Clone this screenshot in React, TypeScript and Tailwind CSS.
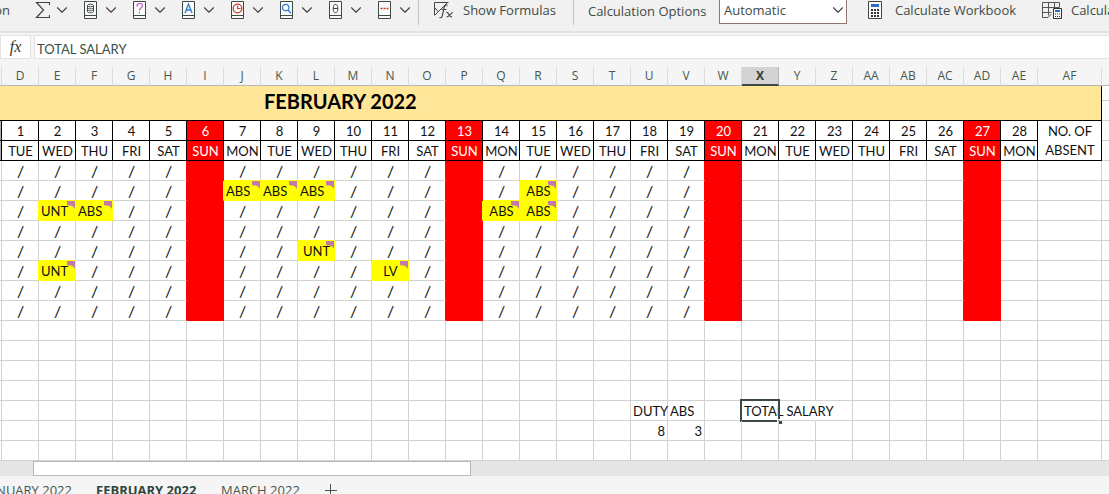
import React, { useState } from "react";
import clsx from "clsx";
import { ChevronDown } from "lucide-react";

type Fill = "red" | "yellow" | undefined;

interface Cell {
  text?: string;
  align?: "left" | "center" | "right";
  fill?: Fill;
  note?: boolean;
  spill?: boolean;
  active?: boolean;
}

const LETTERS = [
  "D", "E", "F", "G", "H", "I", "J", "K", "L", "M", "N", "O", "P", "Q",
  "R", "S", "T", "U", "V", "W", "X", "Y", "Z", "AA", "AB", "AC", "AD", "AE",
];
const WEEK = ["MON", "TUE", "WED", "THU", "FRI", "SAT", "SUN"];
const DAYS = LETTERS.map((_, i) => ({ day: i + 1, name: WEEK[(i + 1) % 7] }));
const LAST_MARKED_DAY = 19;
const ATTENDANCE_ROWS = 8;
const TOTAL_ROWS = 15;

// key is `${row}-${day}`
const MARKS: Record<string, Cell> = {
  "1-7": { text: "ABS", align: "left" },
  "1-8": { text: "ABS", align: "left" },
  "1-9": { text: "ABS", align: "left" },
  "1-15": { text: "ABS" },
  "2-2": { text: "UNT", align: "left" },
  "2-3": { text: "ABS", align: "left" },
  "2-14": { text: "ABS" },
  "2-15": { text: "ABS" },
  "4-9": { text: "UNT" },
  "5-2": { text: "UNT", align: "left" },
  "5-11": { text: "LV" },
};

const EXTRA: Record<string, Cell> = {
  "12-18": { text: "DUTY", align: "left" },
  "12-19": { text: "ABS", align: "left" },
  "12-21": { text: "TOTAL SALARY", align: "left", active: true },
  "12-22": { spill: true },
  "13-18": { text: "8", align: "right" },
  "13-19": { text: "3", align: "right" },
};

const getCell = (row: number, day: number): Cell => {
  const key = `${row}-${day}`;
  if (row >= ATTENDANCE_ROWS) return EXTRA[key] || {};
  if (day % 7 === 6 && day <= 28) return { fill: "red" };
  if (MARKS[key]) return { ...MARKS[key], fill: "yellow", note: true };
  return day <= LAST_MARKED_DAY && day > 0 ? { text: "/" } : {};
};

const rightBorder = (fill: Fill) =>
  fill === "red"
    ? "border-r-[#ff0000]"
    : fill === "yellow"
      ? "border-r-[#ffff00]"
      : "border-r-[#d2d2d2]";

const bottomBorder = (fill: Fill) =>
  fill === "red"
    ? "border-b-[#ff0000]"
    : fill === "yellow"
      ? "border-b-[#ffff00]"
      : "border-b-[#d2d2d2]";

const NoteMark = () => (
  <svg className="absolute top-0 right-0 h-2 w-2" viewBox="0 0 8 8">
    <path d="M0 0H8V8Q6.500 5 4 4.500H1L0 3.500Z" fill="#c27ba8" />
  </svg>
);

const GridCell = ({ row, day }: { row: number; day: number }) => {
  const cell = getCell(row, day);
  const next = getCell(row, day + 1);
  const below = getCell(row + 1, day);
  const align = cell.align || "center";

  return (
    <td
      className={clsx(
        "relative h-5 border-r border-b p-0 whitespace-nowrap",
        cell.spill ? "border-r-transparent" : rightBorder(next.fill || cell.fill),
        bottomBorder(below.fill || cell.fill),
        cell.fill === "red" && "bg-[#ff0000]",
        cell.fill === "yellow" && "bg-[#ffff00]",
        cell.text === "/" ? "text-base leading-[19px]" : "pt-[2px] leading-[17px]",
        align === "left" && "pl-[2px] text-left",
        align === "center" && "pl-px text-center",
        align === "right" && "pr-[2px] text-right"
      )}
    >
      {cell.text}
      {cell.note && <NoteMark />}
      {cell.active && (
        <>
          <span className="absolute -inset-x-0.5 -inset-y-0.5 border-2 border-[#3a4a42]" />
          <span className="absolute -right-1 -bottom-1 h-[5px] w-[5px] border-t border-l border-white bg-[#3a4a42]" />
        </>
      )}
    </td>
  );
};

const Sheet = () => (
  <table className="w-full table-fixed border-separate border-spacing-0 bg-white font-[Lato,Carlito,sans-serif] text-[13px] text-[#111]">
    <colgroup>
      <col className="w-[2px]" />
      {LETTERS.map((letter) => (
        <col key={letter} className="w-[37px]" />
      ))}
      <col className="w-16" />
      <col />
    </colgroup>
    <thead>
      <tr className="bg-[#f5f5f5] font-['Open_Sans',sans-serif] text-xs text-[#44584f]">
        <th className="h-[19px] border-r border-b border-r-[#dcdcdc] border-b-[#b4b9b6] p-0" />
        {[...LETTERS, "AF"].map((letter) => (
          <th
            key={letter}
            className={clsx(
              "h-[19px] border-r p-0 leading-4",
              letter === "X"
                ? "border-b-2 border-r-[#b5b5b5] border-b-[#3a4a42] bg-[#d3d3d3] font-bold text-[#2b3a33]"
                : "border-b border-r-[#dcdcdc] border-b-[#b4b9b6] pb-px font-normal"
            )}
          >
            {letter}
          </th>
        ))}
        <th className="h-[19px] border-b border-b-[#b4b9b6] p-0" />
      </tr>
    </thead>
    <tbody>
      <tr>
        <td
          colSpan={30}
          rowSpan={2}
          className="border-r border-b border-black bg-[#ffe699] p-0 pb-1 pl-[264px] text-left text-xl leading-7 font-bold text-black"
        >
          FEBRUARY 2022
        </td>
        <td className="h-[15px] border-b border-[#d2d2d2] p-0" />
      </tr>
      <tr>
        <td className="h-5 border-b border-[#d2d2d2] p-0" />
      </tr>
      {["day", "name"].map((kind) => (
        <tr key={kind}>
          <td className="h-5 border-r border-b border-black bg-[#b0b0b0] p-0" />
          {DAYS.map(({ day, name }) => (
            <td
              key={day}
              className={clsx(
                "h-5 border-r border-b border-black p-0 pt-[2px] pl-px text-center leading-[17px]",
                name === "SUN" && "bg-[#ff0000] text-white"
              )}
            >
              {kind === "day" ? day : name}
            </td>
          ))}
          {kind === "day" && (
            <td
              rowSpan={2}
              className="border-r border-b border-black p-0 pt-px pl-px text-center leading-[19px]"
            >
              NO. OF
              <br />
              ABSENT
            </td>
          )}
          <td className="h-5 border-b border-[#d2d2d2] p-0" />
        </tr>
      ))}
      {Array.from({ length: TOTAL_ROWS }, (_, row) => (
        <tr key={row}>
          <td className="h-5 border-r border-b border-[#d2d2d2] p-0" />
          {DAYS.map(({ day }) => (
            <GridCell key={day} row={row} day={day} />
          ))}
          <td className="h-5 border-r border-b border-[#d2d2d2] p-0" />
          <td className="h-5 border-b border-[#d2d2d2] p-0" />
        </tr>
      ))}
    </tbody>
  </table>
);

const Book = ({ children }: { children?: React.ReactNode }) => (
  <svg
    className="h-[18px] w-[13px]"
    viewBox="0 0 13 18"
    fill="none"
    stroke="#3b4a43"
  >
    <path d="M.5.5h12v17H.5zM.5 14.500h12" fill="#fafafa" />
    {children}
  </svg>
);

const LIBRARY = [
  {
    label: "AutoSum",
    icon: (
      <svg className="h-[18px] w-[15px]" viewBox="0 0 15 18" fill="none" stroke="#444">
        <path d="M14.500 4V1.500H1.500L8.500 9L1.500 16.500H14.500V14" strokeWidth="1.200" />
      </svg>
    ),
  },
  {
    label: "Financial",
    icon: (
      <Book>
        <ellipse cx="6.500" cy="4.500" rx="3" ry="1.300" />
        <path d="M3.500 4.500v6c0 1.700 6 1.700 6 0v-6M3.500 6.500c0 1.700 6 1.700 6 0M3.500 8.500c0 1.700 6 1.700 6 0" />
      </Book>
    ),
  },
  {
    label: "Logical",
    icon: (
      <Book>
        <path d="M3.800 5.500c0-4 5.700-3.800 5.700-.7c0 2.200-3 2.200-3 4.700M6.500 11v1.500" stroke="#b660b8" strokeWidth="1.200" />
      </Book>
    ),
  },
  {
    label: "Text",
    icon: (
      <Book>
        <path d="M3 12L6.500 3L10 12M4.200 9h4.600" stroke="#2b7cd3" strokeWidth="1.300" />
      </Book>
    ),
  },
  {
    label: "Date & Time",
    icon: (
      <Book>
        <circle cx="6.500" cy="7.500" r="4.300" stroke="#d0402b" strokeWidth="1.300" />
        <path d="M6.500 4.500v3h3" stroke="#d0402b" strokeWidth="1.200" />
      </Book>
    ),
  },
  {
    label: "Lookup & Reference",
    icon: (
      <Book>
        <circle cx="5.700" cy="6.500" r="3.200" stroke="#2b7cd3" strokeWidth="1.200" />
        <path d="M8 9l3 3.200" stroke="#2b7cd3" strokeWidth="1.300" />
      </Book>
    ),
  },
  {
    label: "Math & Trig",
    icon: (
      <Book>
        <ellipse cx="6.500" cy="7.500" rx="2.300" ry="4.200" />
        <path d="M4.200 7.500h4.600" />
      </Book>
    ),
  },
  {
    label: "More Functions",
    icon: (
      <Book>
        <path d="M2.500 7.500h8" stroke="#d0402b" strokeWidth="1.500" strokeDasharray="2 1" />
      </Book>
    ),
  },
];

const ShowFormulasIcon = () => (
  <svg className="h-[18px] w-5" viewBox="0 0 20 18" fill="none" stroke="#444">
    <path d="M.5 14V1.500H14.500M.5 14.500L13 2M1 7L4 10.500" />
    <path d="M13.500 4.500c-2-1.500-3 0-3.500 2.500L8.500 14c-.4 2.300-1.500 3.200-3 2.500M7.500 8.500h5" strokeWidth="1.200" />
    <path d="M12.500 11.500c2.500-1 2 4.500 5.500 4.500M19 11.500c-2 0-4 4.500-6.500 4.500" strokeWidth="1.100" />
  </svg>
);

const CalculatorIcon = () => (
  <svg className="h-[18px] w-[14px]" viewBox="0 0 14 18" fill="none">
    <path d="M.5.5h13v17H.5z" fill="#fafafa" stroke="#444" />
    <path d="M3 3h8v3H3z" fill="#2b6cc4" />
    <path d="M3 9h8M3 12h8M3 15h8" stroke="#333" strokeWidth="2" strokeDasharray="2 1" />
  </svg>
);

const CalculateSheetIcon = () => (
  <svg className="h-[18px] w-5" viewBox="0 0 20 18" fill="none">
    <path
      d="M17.500 6V1.500H.5v15H6L9.500 13M.5 6.500h17M.5 11.500h9M6.500 1.500v13M12.500 1.500v5"
      stroke="#555"
    />
    <path d="M11.500 7.500h8v10h-8z" fill="#fafafa" stroke="#333" />
    <path d="M13 9h5v2h-5z" fill="#2b6cc4" />
    <path d="M13 13h5M13 15.500h5" stroke="#333" strokeDasharray="1 1" />
  </svg>
);

const Ribbon = () => (
  <div className="flex h-[31px] items-start overflow-hidden bg-[#f1f1f1] text-[13px] leading-5 whitespace-nowrap text-[#3f4a45]">
    <div className="flex w-[10px] shrink-0 justify-end overflow-hidden">on</div>
    <div className="ml-[25px] flex shrink-0">
      {LIBRARY.map(({ label, icon }) => (
        <button
          key={label}
          aria-label={label}
          className="flex w-[49px] items-center pt-px"
        >
          <span className="w-[22px]">{icon}</span>
          <ChevronDown size={18} strokeWidth={1.500} className="-ml-1 text-[#444]" />
        </button>
      ))}
    </div>
    <div className="ml-[-9px] h-[25px] w-px shrink-0 bg-[#c3c3c3]" />
    <button className="ml-[15px] flex shrink-0 items-center gap-[9px]">
      <ShowFormulasIcon />
      Show Formulas
    </button>
    <div className="ml-[17px] h-[25px] w-px shrink-0 bg-[#c3c3c3]" />
    <label htmlFor="calc-mode" className="ml-[14px] w-[131px] shrink-0 pt-px">
      Calculation Options
    </label>
    <div className="relative w-32 shrink-0">
      <select
        id="calc-mode"
        className="block h-6 w-full appearance-none border border-t-0 border-[#8f7470] bg-white pb-1 pl-1"
      >
        <option>Automatic</option>
      </select>
      <ChevronDown
        size={18}
        strokeWidth={1.500}
        className="pointer-events-none absolute top-px right-0 text-[#444]"
      />
    </div>
    <button className="ml-[21px] flex w-[174px] shrink-0 items-center gap-[13px]">
      <CalculatorIcon />
      Calculate Workbook
    </button>
    <button className="flex shrink-0 items-center gap-[9px]">
      <CalculateSheetIcon />
      Calculate Sheet
    </button>
  </div>
);

const FormulaBar = () => {
  const [value, setValue] = useState("TOTAL SALARY");

  return (
    <div className="flex gap-[3px] border-t-2 border-[#e2e2e2] bg-[#f5f5f5] pt-[2px] pb-2">
      <button
        aria-label="Insert function"
        className="h-6 w-[31px] border border-[#e2e2e2] bg-white font-['Liberation_Serif',serif] text-base leading-5 text-[#333] italic"
      >
        fx
      </button>
      <input
        aria-label="Formula"
        value={value}
        onChange={(e) => setValue(e.target.value)}
        className="h-6 flex-1 border border-r-0 border-[#e2e2e2] bg-white px-[2px] pt-1 font-[Lato,Carlito,sans-serif] text-[13px] text-[#3a4f46] outline-none"
      />
    </div>
  );
};

const SheetTabs = () => (
  <nav className="flex flex-1 items-start overflow-hidden pt-1 text-[13px] leading-5 whitespace-nowrap text-[#44584f]">
    <a href="#january" className="flex w-[72px] shrink-0 justify-end overflow-hidden">
      JANUARY 2022
    </a>
    <a href="#february" className="ml-6 w-[125px] font-bold text-[#2f463c]">
      FEBRUARY 2022
    </a>
    <a href="#march" className="w-[104px]">
      MARCH 2022
    </a>
    <button aria-label="New sheet" className="mt-1">
      <svg className="h-3 w-3" viewBox="0 0 12 12" stroke="#44584f">
        <path d="M5.500 0v12M0 6.500h12" />
      </svg>
    </button>
  </nav>
);

const App = () => (
  <div className="flex h-screen flex-col overflow-hidden bg-[#f5f5f5] font-['Open_Sans',sans-serif]">
    <Ribbon />
    <FormulaBar />
    <Sheet />
    <div className="flex h-[15px] shrink-0 bg-[#e6e6e6] pl-[33px]">
      <div className="w-[438px] border border-[#b8b8b8] bg-white" />
    </div>
    <SheetTabs />
  </div>
);

export default App;
